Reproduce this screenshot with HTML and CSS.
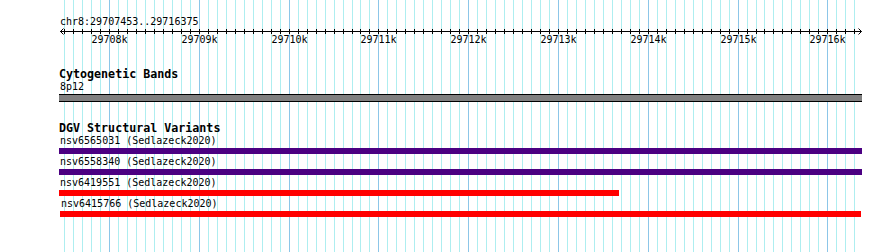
FILE: index.html
```html
<!DOCTYPE html>
<html lang="en">
<head>
    <meta charset="UTF-8">
    <meta name="viewport" content="width=device-width, initial-scale=1.0">
    <title>chr8:29707453..29716375</title>
    <link rel="stylesheet" href="styles.css">
</head>
<body>
    <div class="browser">
        <svg class="grid" id="grid" width="890" height="252"></svg>

        <div class="ruler">
            <div class="ruler-title">chr8:29707453..29716375</div>
            <svg class="scale" id="scale" width="890" height="19"></svg>
        </div>

        <div class="track">
            <div class="track-title">Cytogenetic Bands</div>
            <div class="features">
                <div class="feature" data-start="29600000" data-end="32400000">
                    <div class="feature-label">8p12</div>
                    <div class="feature-bar band"></div>
                </div>
            </div>
        </div>

        <div class="track">
            <div class="track-title">DGV Structural Variants</div>
            <div class="features">
                <div class="feature" data-start="29690210" data-end="29731874">
                    <div class="feature-label">nsv6565031 (Sedlazeck2020)</div>
                    <div class="feature-bar loss"></div>
                </div>
                <div class="feature" data-start="29702118" data-end="29722540">
                    <div class="feature-label">nsv6558340 (Sedlazeck2020)</div>
                    <div class="feature-bar loss"></div>
                </div>
                <div class="feature" data-start="29704302" data-end="29713679">
                    <div class="feature-label">nsv6419551 (Sedlazeck2020)</div>
                    <div class="feature-bar gain"></div>
                </div>
                <div class="feature" data-start="29707455" data-end="29716375">
                    <div class="feature-label">nsv6415766 (Sedlazeck2020)</div>
                    <div class="feature-bar gain"></div>
                </div>
            </div>
        </div>
    </div>

    <script>
        const view = { start: 29707453, end: 29716375, left: 60, right: 861, clipLeft: 59, clipRight: 862 };
        const pxPerBp = (view.right - view.left) / (view.end - view.start);
        const toPx = bp => view.left + (bp - view.start) * pxPerBp;
        const NS = 'http://www.w3.org/2000/svg';

        function svgEl(name, attrs, parent) {
            const el = document.createElementNS(NS, name);
            for (const key in attrs) el.setAttribute(key, attrs[key]);
            parent.appendChild(el);
            return el;
        }

        const grid = document.getElementById('grid');
        const scale = document.getElementById('scale');

        // axis with arrows on both ends
        svgEl('line', { x1: view.left, y1: 3.5, x2: view.right + 0.5, y2: 3.5, class: 'axis' }, scale);
        svgEl('polyline', { points: `${view.left + 3.5},0.5 ${view.left + 0.5},3.5 ${view.left + 3.5},6.5`, class: 'axis' }, scale);
        svgEl('polyline', { points: `${view.right - 2.5},0.5 ${view.right + 0.5},3.5 ${view.right - 2.5},6.5`, class: 'axis' }, scale);

        // grid lines + ticks every 100bp, labels every 1kb
        for (let bp = Math.ceil(view.start / 100) * 100; bp <= view.end; bp += 100) {
            const x = Math.round(toPx(bp)) + 0.5;
            const major = bp % 1000 === 0;
            svgEl('line', { x1: x, y1: 0, x2: x, y2: 252, class: major ? 'major' : 'minor' }, grid);
            svgEl('line', { x1: x, y1: 1, x2: x, y2: 6, class: 'axis' }, scale);
            if (major) {
                const label = svgEl('text', { x: x, y: 15, class: 'tick-label' }, scale);
                label.textContent = (bp / 1000) + 'k';
            }
        }

        // place features
        document.querySelectorAll('.feature').forEach(function(f) {
            const left = Math.max(view.clipLeft, Math.round(toPx(+f.dataset.start)));
            const right = Math.min(view.clipRight, Math.round(toPx(+f.dataset.end)));
            f.style.marginLeft = left + 'px';
            f.style.width = (right - left) + 'px';
        });
    </script>
</body>
</html>
```

FILE: styles.css
```css
body {
    margin: 0;
    background: #fff;
    color: #000;
    font-family: "DejaVu Sans Mono", "Liberation Mono", monospace;
}
.browser {
    position: relative;
    width: 890px;
    height: 252px;
    overflow: hidden;
}
.grid {
    position: absolute;
    top: 0;
    left: 0;
}
.grid .minor {
    stroke: #aeeef0;
    stroke-width: 1;
}
.grid .major {
    stroke: #8cc6e8;
    stroke-width: 1;
}
.ruler, .track {
    position: relative;
}
.ruler-title {
    padding: 16px 0 0 60px;
    font-size: 10px;
    line-height: 12px;
    white-space: nowrap;
}
.scale {
    display: block;
}
.scale .axis {
    stroke: #000;
    stroke-width: 1;
    fill: none;
}
.scale .tick-label {
    font-family: "DejaVu Sans Mono", monospace;
    font-size: 10px;
    text-anchor: middle;
    fill: #000;
}
.track {
    margin-top: 20px;
}
.ruler + .track {
    margin-top: 21px;
}
.track-title {
    padding-left: 59px;
    font-size: 11.67px;
    font-weight: bold;
    line-height: 13px;
    white-space: nowrap;
}
.features {
    display: flex;
    flex-direction: column;
    gap: 2px;
}
.feature-label {
    padding-left: 1px;
    font-size: 10px;
    line-height: 12px;
    white-space: nowrap;
}
.feature-bar {
    margin-top: 1px;
    height: 6px;
}
.feature-bar.band {
    height: 6px;
    background: #808080;
    border-top: 1px solid #000;
    border-bottom: 1px solid #000;
}
.feature-bar.loss {
    background: #4b0082;
}
.feature-bar.gain {
    background: #ff0000;
}
```
